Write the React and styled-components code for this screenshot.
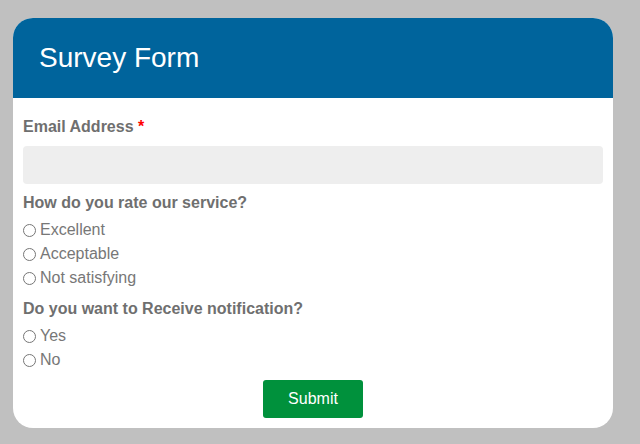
import React from 'react';
import styled, { createGlobalStyle } from 'styled-components';

const GlobalStyle = createGlobalStyle`
  html, body {
    margin: 0;
    padding: 0;
    background-color: #c0c0c0;
    font-family: "Liberation Sans", Arial, sans-serif;
  }
`;

function App() {
  return <>
    <GlobalStyle />
    <Page>
      <Card>
        <Header>
          <Title>Survey Form</Title>
        </Header>
        <Form onSubmit={(e) => e.preventDefault()}>
          <Label htmlFor="email">Email Address <Required>*</Required></Label>
          <EmailInput id="email" type="email" />

          <Question>How do you rate our service?</Question>
          <Options>
            <Option><Radio type="radio" name="rate" />Excellent</Option>
            <Option><Radio type="radio" name="rate" />Acceptable</Option>
            <Option><Radio type="radio" name="rate" />Not satisfying</Option>
          </Options>

          <Question>Do you want to Receive notification?</Question>
          <Options>
            <Option><Radio type="radio" name="notify" />Yes</Option>
            <Option><Radio type="radio" name="notify" />No</Option>
          </Options>

          <SubmitRow>
            <SubmitButton type="submit">Submit</SubmitButton>
          </SubmitRow>
        </Form>
      </Card>
    </Page>
  </>;
}

const Page = styled.div`
  padding: 18px 0 0 13px;
  height: 444px;
  box-sizing: border-box;
`;

const Card = styled.div`
  width: 600px;
  background-color: #ffffff;
  border-radius: 20px;
  overflow: hidden;
`;

const Header = styled.div`
  height: 80px;
  background-color: #00649c;
  display: flex;
  align-items: center;
  padding-left: 26px;
`;

const Title = styled.h1`
  margin: 0;
  color: #ffffff;
  font-size: 28px;
  font-weight: normal;
`;

const Form = styled.form`
  display: flex;
  flex-direction: column;
  padding: 19px 10px 10px;
  color: #6f6f6f;
`;

const Label = styled.label`
  font-size: 16px;
  font-weight: bold;
  line-height: 20px;
`;

const Required = styled.span`
  color: #ff0000;
`;

const EmailInput = styled.input`
  margin-top: 9px;
  height: 38px;
  box-sizing: border-box;
  border: none;
  border-radius: 4px;
  background-color: #eeeeee;
  padding: 0 10px;
  font-size: 16px;
`;

const Question = styled.p`
  margin: 9px 0 0;
  font-size: 16px;
  font-weight: bold;
  line-height: 20px;
`;

const Options = styled.div`
  display: flex;
  flex-direction: column;
  margin-top: 5px;
`;

const Option = styled.label`
  display: flex;
  align-items: center;
  height: 24px;
  font-size: 16px;
  color: #777777;
`;

const Radio = styled.input`
  margin: 0 4px 0 0;
  width: 13px;
  height: 13px;
`;

const SubmitRow = styled.div`
  display: flex;
  justify-content: center;
  margin-top: 8px;
`;

const SubmitButton = styled.button`
  width: 100px;
  height: 38px;
  border: none;
  border-radius: 3px;
  background-color: #00913c;
  color: #ffffff;
  font-family: "Liberation Sans", Arial, sans-serif;
  font-size: 16px;
`;

export default App;
